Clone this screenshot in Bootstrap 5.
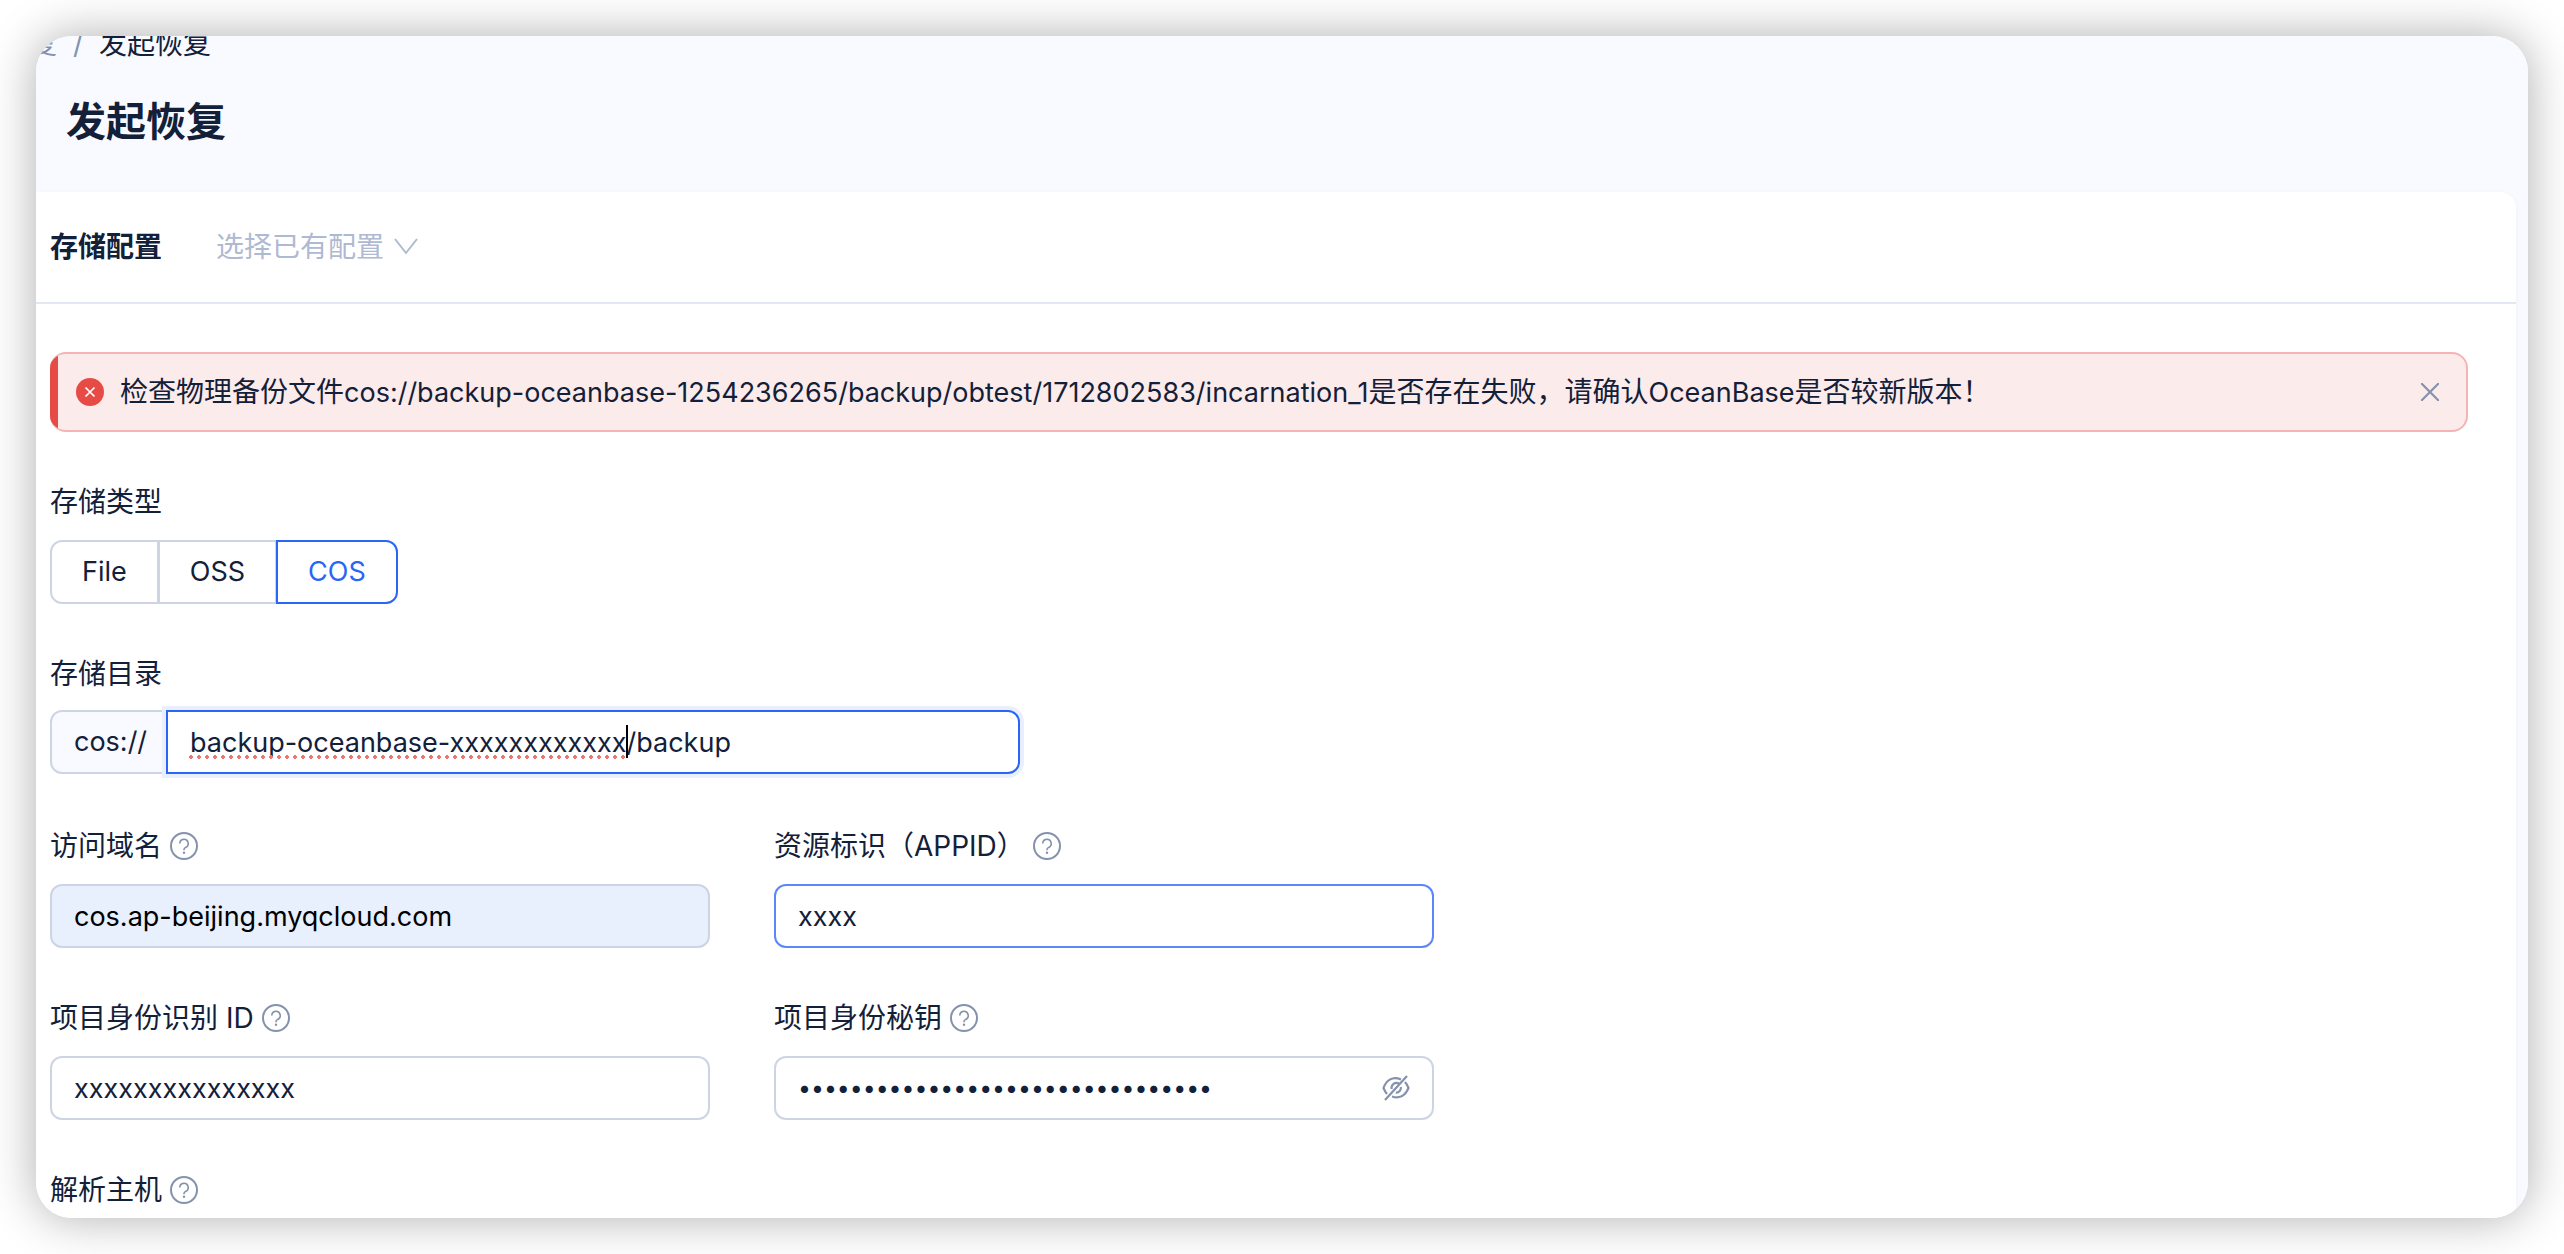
<!DOCTYPE html>
<html lang="zh-CN">
<head>
<meta charset="utf-8">
<meta name="viewport" content="width=device-width, initial-scale=1">
<title>发起恢复</title>
<link href="https://cdn.jsdelivr.net/npm/bootstrap@5.3.0/dist/css/bootstrap.min.css" rel="stylesheet">
<style>
:root { --ink: #132039; --line: #cdd5e4; --muted: #8592ad; --brand: #2a66f5; }
body { height: 100vh; padding: 36px; background: #fff; color: var(--ink); font: 28px/44px Inter, "Noto Sans CJK SC", sans-serif; overflow: hidden; }
.app-shadow { height: 100%; border-radius: 36px; box-shadow: 0 0 48px rgba(0,0,0,.32); }
.app-window { height: 100%; border-radius: 36px; background: #f9faff; overflow: hidden; }
.crumbs { margin: -14px 0 0 -7px; gap: 16px; }
.crumbs a, .crumbs .slash { color: var(--muted); text-decoration: none; }
.page-title { font-size: 40px; line-height: 56px; font-weight: 600; margin: 28px 30px 42px; }
.panel { margin-right: 12px; height: 100%; background: #fff; border-radius: 0 16px 0 0; box-shadow: 0 2px 6px rgba(60,70,140,.05); }
.panel-head { height: 112px; padding: 0 14px; border-bottom: 2px solid #e2e7f3; gap: 54px; }
.panel-head h2 { font-size: 28px; line-height: 44px; font-weight: 600; }
.pick { color: #afb9d2; border: 0; background: none; padding: 0; gap: 10px; }
.panel-body { padding: 48px 48px 0 14px; }
.fail-alert { height: 80px; margin-bottom: 48px; background: #fcebeb; border: 2px solid #f5b4b4; border-left: 0; border-radius: 16px; overflow: hidden; gap: 16px; padding-right: 27px; }
.fail-bar { width: 8px; height: 80px; margin-right: 2px; background: #e64c45; }
.latin { font-size: 27px; }
.plain-btn { border: 0; background: none; padding: 0; display: flex; color: var(--muted); }
.field-row { margin-bottom: 48px; }
.field-label { display: flex; align-items: center; gap: 8px; height: 44px; margin: 0 0 16px; }
.dir-row { margin-bottom: 50px; }
.dir-row .field-label { margin-bottom: 14px; }
.type-group .btn { height: 64px; padding: 0 30px; border: 2px solid var(--line); border-radius: 12px; font-size: 27px; line-height: 60px; color: var(--ink); background: #fff; }
.type-group > .btn:not(:first-of-type) { margin-left: -2px; }
.type-group .btn-check:checked + .btn { color: var(--brand); border-color: var(--brand); background: #fff; }
.dir-group { max-width: 970px; }
.dir-group .input-group-text { width: 118px; height: 64px; padding: 0 0 0 22px; font-size: 27px; color: var(--ink); background: #f9faff; border: 2px solid var(--line); border-radius: 12px; }
.form-control { height: 64px; padding: 0 22px; font-size: 27px; line-height: 44px; color: var(--ink); border: 2px solid var(--line); border-radius: 12px; }
.dir-group .form-control, .dir-group .form-control:focus { border-color: var(--brand); box-shadow: 0 0 0 4px #e9effe; margin-left: -2px !important; border-radius: 0 12px 12px 0 !important; }
.is-hover { border-color: #5b87f8; }
.is-filled { background: #e8effd; color: #000; }
.secret { font-family: Inter, sans-serif; font-size: 23px; padding-right: 72px; }
.cols { display: grid; grid-template-columns: repeat(2, minmax(0, 660px)); column-gap: 64px; }
.spell { position: absolute; z-index: 6; left: 140px; top: 45px; width: 438px; height: 4px; background: radial-gradient(circle at 2px 2px, #f0766e 2px, transparent 2px) 0 0 / 8px 4px repeat-x; }
.caret { position: absolute; z-index: 6; left: 577px; top: 15px; width: 2px; height: 33px; background: #000; }
.eye { position: absolute; right: 24px; top: 18px; }
</style>
<script src="https://cdn.jsdelivr.net/npm/bootstrap@5.3.0/dist/js/bootstrap.bundle.min.js"></script>
</head>
<body>
<svg class="d-none">
  <symbol id="help" viewBox="0 0 28 28"><circle cx="14" cy="14" r="13" fill="none" stroke="currentColor" stroke-width="2"/><path d="M9.800 11.500a4.200 4.200 0 1 1 5.800 3.900c-1 .4-1.600 1-1.600 2.100v.8" fill="none" stroke="currentColor" stroke-width="1.600"/><circle cx="14" cy="20.700" r="1.200" fill="currentColor"/></symbol>
</svg>
<div class="app-shadow">
<div class="app-window d-flex flex-column">
  <header>
    <nav class="crumbs d-flex" aria-label="breadcrumb"><a href="#">复</a><span class="slash">/</span><span>发起恢复</span></nav>
    <h1 class="page-title">发起恢复</h1>
  </header>
  <main class="panel flex-grow-1">
    <div class="panel-head d-flex align-items-center">
      <h2 class="m-0">存储配置</h2>
      <button type="button" class="pick d-flex align-items-center">选择已有配置
        <svg width="24" height="18" viewBox="0 0 24 18" fill="none" stroke="currentColor" stroke-width="2"><path d="M1 1l11 14L23 1"/></svg></button>
    </div>
    <form class="panel-body" onsubmit="return false">
      <div class="fail-alert d-flex align-items-center" role="alert">
        <span class="fail-bar"></span>
        <svg width="28" height="28" viewBox="0 0 28 28"><circle cx="14" cy="14" r="14" fill="#e64c45"/><path d="M9.500 9.500l9 9M18.500 9.500l-9 9" stroke="#fff" stroke-width="1.700"/></svg>
        <span class="flex-grow-1">检查物理备份文件<span class="latin">cos://backup-oceanbase-1254236265/backup/obtest/1712802583/incarnation_1</span>是否存在失败，请确认<span class="latin">OceanBase</span>是否较新版本！</span>
        <button type="button" class="plain-btn" aria-label="关闭"><svg width="18" height="18" viewBox="0 0 18 18" stroke="currentColor" stroke-width="2.200"><path d="M0 0l18 18M18 0L0 18"/></svg></button>
      </div>
      <div class="field-row">
        <div class="field-label" id="type-label">存储类型</div>
        <div class="btn-group type-group" role="group" aria-labelledby="type-label">
          <input class="btn-check" type="radio" name="kind" id="k1"><label class="btn" for="k1">File</label>
          <input class="btn-check" type="radio" name="kind" id="k2"><label class="btn" for="k2">OSS</label>
          <input class="btn-check" type="radio" name="kind" id="k3" checked><label class="btn" for="k3">COS</label>
        </div>
      </div>
      <div class="dir-row">
        <label class="field-label" for="dir">存储目录</label>
        <div class="input-group dir-group">
          <span class="input-group-text">cos://</span>
          <input class="form-control" id="dir" type="text" spellcheck="false" value="backup-oceanbase-xxxxxxxxxxxx/backup">
          <span class="spell"></span><span class="caret"></span>
        </div>
      </div>
      <div class="cols field-row">
        <div>
          <label class="field-label" for="host">访问域名<svg width="28" height="28" color="#8592ad"><use href="#help"/></svg></label>
          <input class="form-control is-filled" id="host" type="text" value="cos.ap-beijing.myqcloud.com">
        </div>
        <div>
          <label class="field-label" for="appid">资源标识（APPID）<svg width="28" height="28" color="#8592ad"><use href="#help"/></svg></label>
          <input class="form-control is-hover" id="appid" type="text" value="xxxx">
        </div>
      </div>
      <div class="cols field-row">
        <div>
          <label class="field-label" for="sid">项目身份识别 ID<svg width="28" height="28" color="#8592ad"><use href="#help"/></svg></label>
          <input class="form-control" id="sid" type="text" value="xxxxxxxxxxxxxxx">
        </div>
        <div>
          <label class="field-label" for="skey">项目身份秘钥<svg width="28" height="28" color="#8592ad"><use href="#help"/></svg></label>
          <div class="position-relative">
            <input class="form-control secret" id="skey" type="password" value="xxxxxxxxxxxxxxxxxxxxxxxxxxxxxxxx">
            <button type="button" class="plain-btn eye" aria-label="显示秘钥"><svg width="28" height="28" viewBox="0 0 28 28" fill="none" stroke="currentColor" stroke-width="2.200"><path d="M19 5.500C10 1.500 4 7 1.500 14c1 2.500 2 4.300 3.500 6M23 8c1.500 1.600 2.600 3.600 3.500 6-3 7.500-9 11-16.500 8.500M17 9.500c-4-2-8 1-7.500 5.500M18.800 13c.8 3-2 6-5 5.600M25 2L3 26"/></svg></button>
          </div>
        </div>
      </div>
      <label class="field-label" for="rhost">解析主机<svg width="28" height="28" color="#8592ad"><use href="#help"/></svg></label>
      <input class="form-control" id="rhost" type="text">
    </form>
  </main>
</div>
</div>
</body>
</html>
